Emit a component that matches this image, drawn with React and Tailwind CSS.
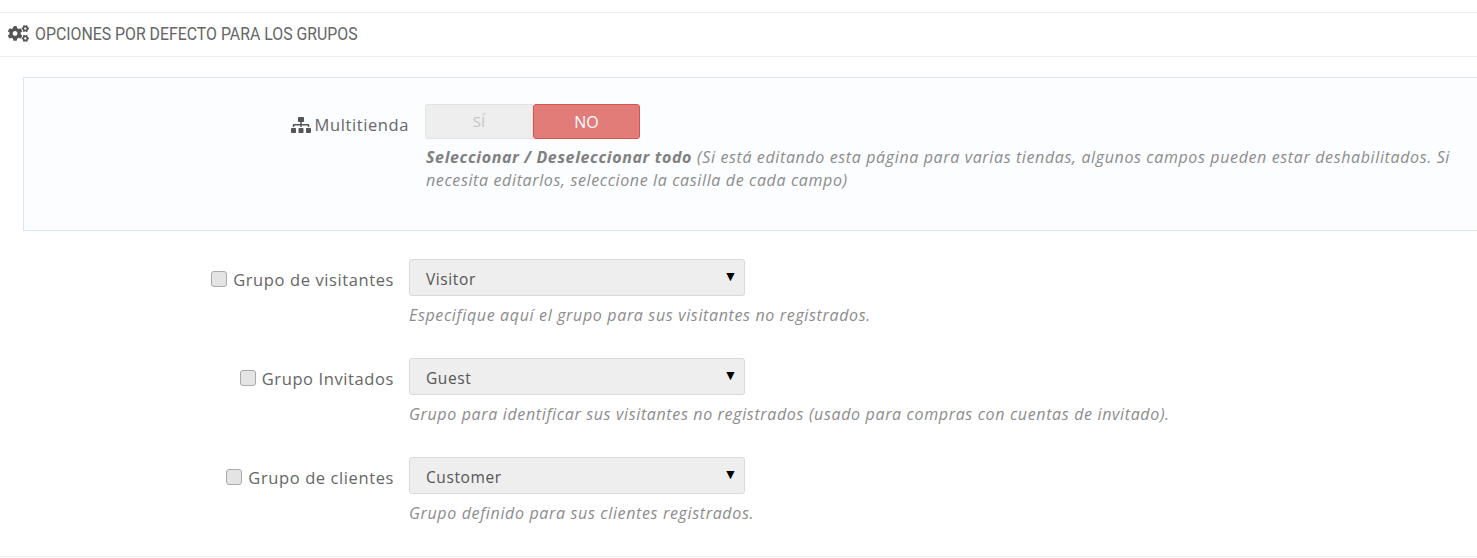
import { FaCogs, FaSitemap } from "react-icons/fa";

const groups = [
  {
    label: "Grupo de visitantes",
    value: "Visitor",
    help: "Especifique aquí el grupo para sus visitantes no registrados.",
  },
  {
    label: "Grupo Invitados",
    value: "Guest",
    help: "Grupo para identificar sus visitantes no registrados (usado para compras con cuentas de invitado).",
  },
  {
    label: "Grupo de clientes",
    value: "Customer",
    help: "Grupo definido para sus clientes registrados.",
  },
];

const GroupRow = ({ label, value, help }) => (
  <div className="flex h-[99px]">
    <div className="flex h-[37px] w-[394px] shrink-0 items-center justify-end pt-[5px] text-[16.5px] tracking-[0.6px] text-[#666]">
      <span className="mb-[2px] mr-[6px] size-[16px] rounded-[3px] border border-[#aaa] bg-[#e4e4e4]" />
      <span>{label}</span>
    </div>
    <div className="ml-[15px]">
      <div className="flex h-[37px] w-[336px] items-center justify-between rounded-[3px] border border-[#d9d9d9] bg-[#eee] pl-[16px] pr-[6px] text-[15.5px] tracking-[0.6px] text-[#555]">
        <span className="pt-[4px]">{value}</span>
        <span className="mb-[5px] text-[14px] text-black">▼</span>
      </div>
      <p className="mt-[9px] whitespace-nowrap text-[16px] leading-[20px] tracking-[0.65px] text-[#8c8c8c] italic">{help}</p>
    </div>
  </div>
);

const App = () => {
  return (
    <div className="h-[558px] overflow-hidden bg-white pt-3 font-['Open_Sans',sans-serif]">
      {/* Header */}
      <div className="flex h-[45px] items-center border-y border-[#eeeeee] pb-[2px] pl-[8px] text-[#555]">
        <FaCogs className="mr-[6px] size-[21px] text-[#555]" />
        <h3 className="origin-left scale-x-[0.88] whitespace-nowrap font-['Roboto',sans-serif] text-[18px] text-[#666]">
          OPCIONES POR DEFECTO PARA LOS GRUPOS
        </h3>
      </div>

      {/* Multitienda */}
      <div className="ml-[23px] mt-[20px] flex h-[154px] border border-r-0 border-[#d9e6f0] bg-[#fbfdff] pt-[26px]">
        <div className="flex h-[35px] w-[385px] shrink-0 items-center justify-end pt-[7px] text-[16.5px] tracking-[0.6px] text-[#666]">
          <FaSitemap className="mr-[4px] size-[20px] text-[#555]" />
          <span>Multitienda</span>
        </div>
        <div className="ml-[16px] min-w-0 flex-1 pr-[24px]">
          <div className="flex h-[35px] w-[215px] text-[15px]">
            <div className="flex w-[108px] items-center justify-center rounded-l-[3px] border border-[#e3e3e3] bg-[#eee] text-[#c5c5c5]">
              SÍ
            </div>
            <div className="flex w-[107px] items-center justify-center rounded-[3px] border border-[#d9534f] bg-[#e27c79] text-[16px] text-white">
              NO
            </div>
          </div>
          <div className="ml-[1px] mt-[7px] whitespace-nowrap text-[16px] leading-[23px] tracking-[0.63px] text-[#8c8c8c] italic">
            <p className="flex gap-[5px]">
              <b className="font-bold text-[#808080]">Seleccionar / Deseleccionar todo</b>
              <span>(Si está editando esta página para varias tiendas, algunos campos pueden estar deshabilitados. Si</span>
            </p>
            <p>necesita editarlos, seleccione la casilla de cada campo)</p>
          </div>
        </div>
      </div>

      {/* Grupos */}
      <div className="mt-[28px] h-[298px] border-b border-[#eeeeee]">
        {groups.map((g) => (
          <GroupRow key={g.label} {...g} />
        ))}
      </div>
    </div>
  );
};

export default App;
